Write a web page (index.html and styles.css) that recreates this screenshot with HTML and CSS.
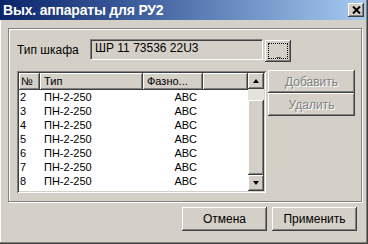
FILE: index.html
```html
<!DOCTYPE html>
<html>
<head>
<meta charset="utf-8">
<link rel="stylesheet" href="styles.css">
</head>
<body>
<div class="window">
  <div class="titlebar">
    <span class="title">Вых. аппараты для РУ2</span>
    <span class="close"><svg width="9" height="8" viewBox="0 0 9 8"><path d="M1 0.5 L8 7.5 M8 0.5 L1 7.5" stroke="#000" stroke-width="2"/></svg></span>
  </div>
  <div class="main">
    <div class="group">
      <div class="row1">
        <span class="label">Тип шкафа</span>
        <div class="field">ШР 11 73536 22U3</div>
        <button class="btn dots"><span class="focus">...</span></button>
      </div>
      <div class="row2">
        <div class="list">
          <div class="list-main">
            <div class="header">
              <div class="hcol c1">№</div>
              <div class="hcol c2">Тип</div>
              <div class="hcol c3">Фазно...</div>
              <div class="hcol c4"></div>
            </div>
            <div class="rows">
              <div class="row"><span class="c1">2</span><span class="c2">ПН-2-250</span><span class="c3">ABC</span></div>
              <div class="row"><span class="c1">3</span><span class="c2">ПН-2-250</span><span class="c3">ABC</span></div>
              <div class="row"><span class="c1">4</span><span class="c2">ПН-2-250</span><span class="c3">ABC</span></div>
              <div class="row"><span class="c1">5</span><span class="c2">ПН-2-250</span><span class="c3">ABC</span></div>
              <div class="row"><span class="c1">6</span><span class="c2">ПН-2-250</span><span class="c3">ABC</span></div>
              <div class="row"><span class="c1">7</span><span class="c2">ПН-2-250</span><span class="c3">ABC</span></div>
              <div class="row"><span class="c1">8</span><span class="c2">ПН-2-250</span><span class="c3">ABC</span></div>
            </div>
          </div>
          <div class="vscroll">
            <div class="sbtn"><span class="tri up"></span></div>
            <div class="track"><div class="thumb"></div></div>
            <div class="sbtn"><span class="tri down"></span></div>
          </div>
        </div>
        <div class="side">
          <button class="btn disabled">Добавить</button>
          <button class="btn disabled">Удалить</button>
        </div>
      </div>
    </div>
    <div class="footer">
      <button class="btn fbtn">Отмена</button>
      <button class="btn fbtn">Применить</button>
    </div>
  </div>
</div>
</body>
</html>
```
FILE: styles.css
```css
html, body {
  margin: 0;
  padding: 0;
  background: #404040;
}
body {
  font-family: "Liberation Sans", Arial, sans-serif;
  font-size: 11px;
  color: #000;
}
.window {
  width: 368px;
  height: 244px;
  box-sizing: border-box;
  background: #d4d0c8;
  box-shadow: inset -1px -1px #404040, inset -2px -2px #808080, inset 1px 0 #fff;
  overflow: hidden;
}
.titlebar {
  height: 20px;
  margin-right: 2px;
  display: flex;
  align-items: center;
  justify-content: space-between;
  padding: 0 2px 0 3px;
  background: linear-gradient(to right, #0a246a 0%, #3a5a9a 35%, #a6caf0 100%);
}
.title {
  color: #fff;
  font-weight: bold;
  font-size: 14px;
  letter-spacing: -0.2px;
}
.close {
  width: 16px;
  height: 14px;
  display: flex;
  align-items: center;
  justify-content: center;
  background: #d4d0c8;
  box-shadow: inset -1px -1px #404040, inset 1px 1px #fff, inset -2px -2px #808080;
}
.main {
  padding: 8px 0 0 8px;
}
.group {
  width: 354px;
  height: 174px;
  box-sizing: border-box;
  border: 1px solid #808080;
  box-shadow: inset 1px 1px #fff, 1px 1px #fff;
  padding: 10px 0 0 8px;
}
.row1 {
  display: flex;
  align-items: flex-start;
  height: 23px;
}
.label {
  width: 73px;
  line-height: 21px;
  padding-top: 1px;
  font-size: 12px;
}
.field {
  width: 173px;
  height: 21px;
  box-sizing: border-box;
  padding: 0 4px;
  line-height: 17px;
  font-size: 12px;
  background: #d4d0c8;
  border-top: 1px solid #808080;
  border-left: 1px solid #808080;
  border-bottom: 1px solid #fff;
  border-right: 1px solid #fff;
  box-shadow: inset 1px 1px #404040;
}
.btn {
  font-family: "Liberation Sans", Arial, sans-serif;
  font-size: 12px;
  color: #000;
  background: #d4d0c8;
  border: none;
  padding: 0;
  margin: 0;
  box-sizing: border-box;
  box-shadow: inset -1px -1px #404040, inset 1px 1px #fff, inset -2px -2px #808080;
}
.dots {
  width: 26px;
  height: 22px;
  margin: 1px 0 0 2px;
  padding: 4px;
  display: flex;
}
.dots .focus {
  flex: 1;
  outline: 1px dotted #000;
  display: flex;
  align-items: flex-end;
  justify-content: center;
  font-size: 9px;
  line-height: 6px;
  letter-spacing: -1px;
}
.row2 {
  display: flex;
  margin-top: 8px;
}
.list {
  width: 249px;
  height: 122px;
  margin-top: 1px;
  box-sizing: border-box;
  padding: 2px;
  display: flex;
  background: #fff;
  box-shadow: inset 1px 1px #808080, inset -1px -1px #fff, inset 2px 2px #404040, inset -2px -2px #d4d0c8;
}
.list-main {
  flex: 1;
  overflow: hidden;
}
.header {
  display: flex;
  height: 17px;
}
.hcol {
  box-sizing: border-box;
  height: 17px;
  line-height: 16px;
  padding: 0 4px;
  background: #d4d0c8;
  box-shadow: inset -1px -1px #404040, inset 1px 1px #fff, inset -2px -2px #808080;
  white-space: nowrap;
  overflow: hidden;
}
.c1 { width: 21px; flex: none; box-sizing: border-box; }
.c2 { width: 103px; flex: none; box-sizing: border-box; }
.c3 { width: 60px; flex: none; box-sizing: border-box; }
.c4 { flex: 1; }
.header .c1 { padding-left: 2px; }
.row {
  display: flex;
  height: 14px;
  line-height: 14px;
}
.row .c1 { padding-left: 1px; }
.row .c2 { padding-left: 4px; }
.row .c3 { text-align: right; padding-right: 6px; }
.vscroll {
  width: 16px;
  display: flex;
  flex-direction: column;
}
.sbtn {
  height: 16px;
  flex: none;
  display: flex;
  align-items: center;
  justify-content: center;
  background: #d4d0c8;
  box-shadow: inset -1px -1px #404040, inset 1px 1px #fff, inset -2px -2px #808080;
}
.tri {
  width: 0;
  height: 0;
  border-left: 3px solid transparent;
  border-right: 3px solid transparent;
}
.tri.up { border-bottom: 4px solid #000; }
.tri.down { border-top: 4px solid #000; }
.track {
  flex: 1;
  background: #e4e2dd;
  display: flex;
  flex-direction: column;
}
.thumb {
  margin-top: 11px;
  flex: 1;
  background: #d4d0c8;
  box-shadow: inset -1px -1px #404040, inset 1px 1px #fff, inset -2px -2px #808080;
}
.side {
  display: flex;
  flex-direction: column;
  margin-left: 2px;
}
.side .btn {
  width: 87px;
  height: 23px;
}
.disabled {
  color: #808080;
  text-shadow: 1px 1px 0 #fff;
}
.footer {
  display: flex;
  justify-content: flex-end;
  gap: 5px;
  margin-top: 5px;
  padding-right: 11px;
}
.fbtn {
  width: 85px;
  height: 24px;
}
```
